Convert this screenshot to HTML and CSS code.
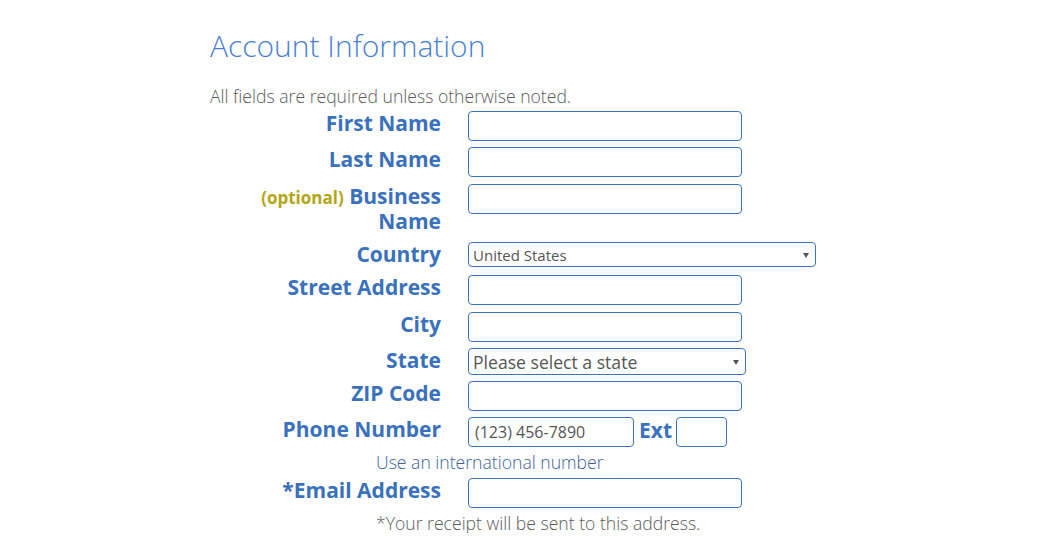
FILE: index.html
```html
<!DOCTYPE html>
<html lang="en">
<head>
<meta charset="utf-8">
<title>Account Information</title>
<link rel="stylesheet" href="styles.css">
</head>
<body>
<div class="page">
  <h1 class="title">Account Information</h1>
  <p class="note">All fields are required unless otherwise noted.</p>
  <form class="form">
    <div class="row">
      <label class="label" for="fn">First Name</label>
      <div class="field"><input class="input" id="fn" type="text"></div>
    </div>
    <div class="row">
      <label class="label" for="ln">Last Name</label>
      <div class="field"><input class="input" id="ln" type="text"></div>
    </div>
    <div class="row row-spaced">
      <label class="label" for="bn"><span class="optional">(optional)</span> Business Name</label>
      <div class="field"><input class="input" id="bn" type="text"></div>
    </div>
    <div class="row row-country">
      <label class="label" for="country">Country</label>
      <div class="field">
        <div class="select-wrap select-country">
          <select class="select select-sm" id="country"><option>United States</option></select>
        </div>
      </div>
    </div>
    <div class="row">
      <label class="label" for="street">Street Address</label>
      <div class="field"><input class="input" id="street" type="text"></div>
    </div>
    <div class="row row-spaced">
      <label class="label" for="city">City</label>
      <div class="field"><input class="input" id="city" type="text"></div>
    </div>
    <div class="row">
      <label class="label" for="state">State</label>
      <div class="field">
        <div class="select-wrap select-state">
          <select class="select select-md" id="state"><option>Please select a state</option></select>
        </div>
      </div>
    </div>
    <div class="row">
      <label class="label" for="zip">ZIP Code</label>
      <div class="field"><input class="input" id="zip" type="text"></div>
    </div>
    <div class="row">
      <label class="label" for="phone">Phone Number</label>
      <div class="field phone">
        <input class="input input-phone" id="phone" type="text" placeholder="(123) 456-7890">
        <label class="label ext-label" for="ext">Ext</label>
        <input class="input input-ext" id="ext" type="text">
      </div>
    </div>
    <div class="hint hint-blue">Use an international number</div>
    <div class="row">
      <label class="label" for="email">*Email Address</label>
      <div class="field"><input class="input" id="email" type="email"></div>
    </div>
    <div class="hint hint-gray">*Your receipt will be sent to this address.</div>
  </form>
</div>
</body>
</html>
```

FILE: styles.css
```css
* { box-sizing: border-box; }

body {
  margin: 0;
  background: #ffffff;
  font-family: "Open Sans", "Noto Sans", sans-serif;
}

.page {
  width: 624px;
  margin: 0 auto;
  padding-top: 25px;
}

.title {
  margin: 0;
  font-size: 30px;
  font-weight: 300;
  line-height: 42px;
  color: #4a7fd6;
}

.note {
  margin: 17px 0 0;
  font-size: 17.6px;
  font-weight: 300;
  line-height: 24px;
  color: #5a5a5a;
}

.form {
  display: flex;
  flex-direction: column;
  gap: 6px;
  margin-top: 3px;
}

.row {
  display: grid;
  grid-template-columns: 231px 1fr;
  column-gap: 27px;
  align-items: start;
}

.row-spaced { margin-top: 1px; }

.row-country { margin: 2px 0 2px; }

.label {
  font-size: 21px;
  font-weight: 700;
  line-height: 25px;
  color: #3a71bd;
  text-align: right;
}

.optional {
  font-size: 17px;
  line-height: 1;
  color: #b3a614;
}

.field {
  display: flex;
  align-items: flex-start;
}

.input {
  width: 274px;
  height: 30px;
  border: 1px solid #3a73c0;
  border-radius: 4px;
  padding: 0 6px;
  font-family: "Open Sans", sans-serif;
  font-size: 16px;
  color: #555;
  background: #fff;
  outline: none;
}

.input::placeholder {
  color: #555;
  opacity: 1;
}

.input-phone { width: 166px; }

.ext-label {
  margin: 0 4px 0 5px;
  line-height: 26px;
}

.input-ext { width: 51px; }

.select-wrap {
  position: relative;
}

.select-wrap::after {
  content: "";
  position: absolute;
  top: 50%;
  margin-top: -2px;
  border-left: 3px solid transparent;
  border-right: 3px solid transparent;
  border-top: 5px solid #555;
  pointer-events: none;
}

.select-country::after { right: 7px; }
.select-state::after { right: 7px; }

.select {
  appearance: none;
  -webkit-appearance: none;
  display: block;
  border: 1px solid #3a73c0;
  border-radius: 4px;
  background: #fff;
  color: #555;
  font-family: "Open Sans", sans-serif;
  padding: 0 20px 0 4px;
  outline: none;
}

.select-sm {
  width: 348px;
  height: 25px;
  font-size: 15px;
}

.select-md {
  width: 278px;
  height: 27px;
  font-size: 17.6px;
}

.hint {
  margin-left: 166px;
  font-size: 17.6px;
  font-weight: 300;
  line-height: 19px;
}

.hint-blue { color: #3c5f9a; }
.hint-gray { color: #5a5a5a; }
```
